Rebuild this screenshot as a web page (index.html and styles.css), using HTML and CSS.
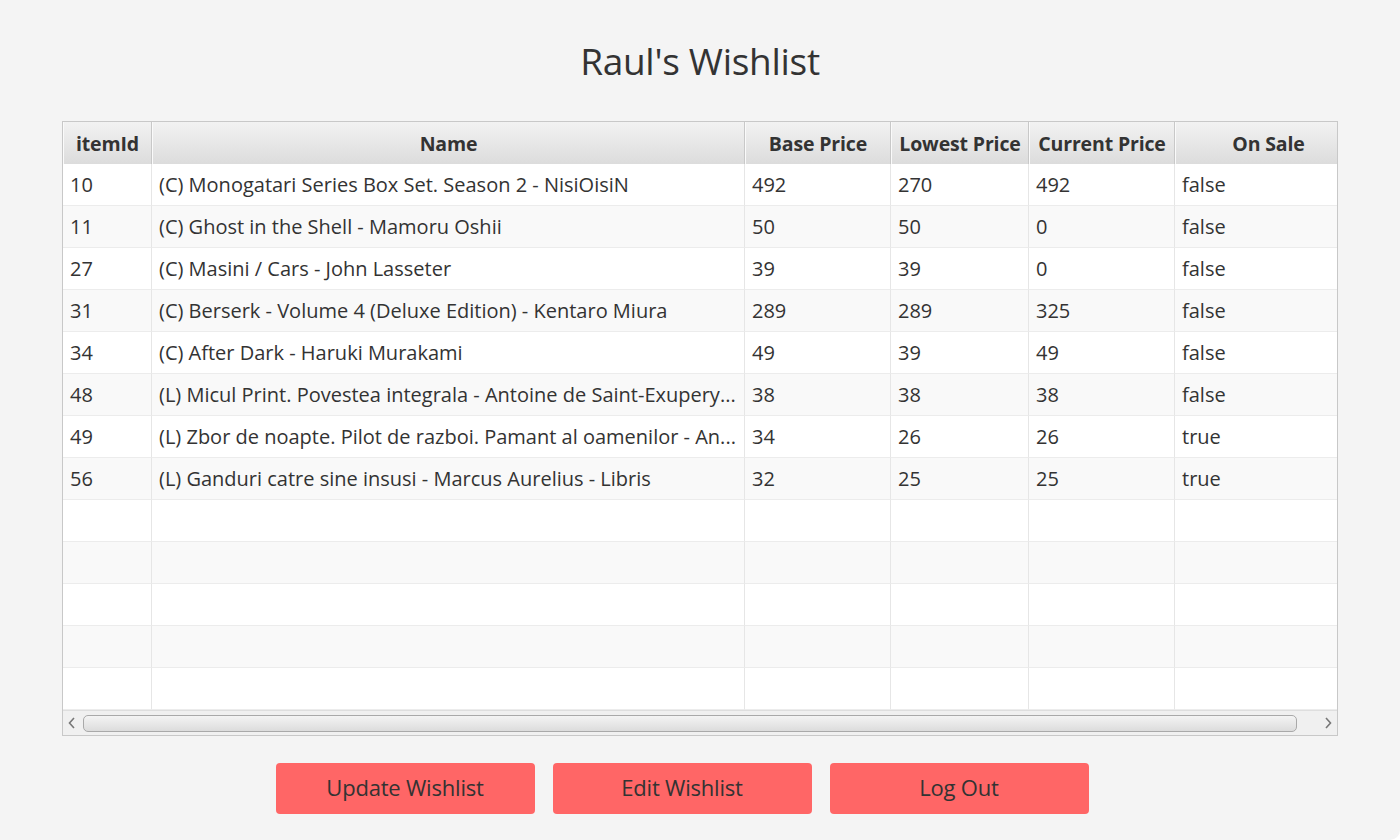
FILE: index.html
```html
<!DOCTYPE html>
<html lang="en">
<head>
<meta charset="utf-8">
<title>Raul's Wishlist</title>
<link rel="stylesheet" href="styles.css">
</head>
<body>
<div class="window">
  <h1 class="title">Raul's Wishlist</h1>
  <div class="table">
    <div class="grid">
      <div class="hd">itemId</div>
      <div class="hd">Name</div>
      <div class="hd">Base Price</div>
      <div class="hd">Lowest Price</div>
      <div class="hd">Current Price</div>
      <div class="hd last">On Sale</div>

      <div class="c">10</div><div class="c">(C) Monogatari Series Box Set. Season 2 - NisiOisiN</div><div class="c">492</div><div class="c">270</div><div class="c">492</div><div class="c">false</div>
      <div class="c o">11</div><div class="c o">(C) Ghost in the Shell - Mamoru Oshii</div><div class="c o">50</div><div class="c o">50</div><div class="c o">0</div><div class="c o">false</div>
      <div class="c">27</div><div class="c">(C) Masini / Cars - John Lasseter</div><div class="c">39</div><div class="c">39</div><div class="c">0</div><div class="c">false</div>
      <div class="c o">31</div><div class="c o">(C) Berserk - Volume 4 (Deluxe Edition) - Kentaro Miura</div><div class="c o">289</div><div class="c o">289</div><div class="c o">325</div><div class="c o">false</div>
      <div class="c">34</div><div class="c">(C) After Dark - Haruki Murakami</div><div class="c">49</div><div class="c">39</div><div class="c">49</div><div class="c">false</div>
      <div class="c o">48</div><div class="c o">(L) Micul Print. Povestea integrala - Antoine de Saint-Exupery...</div><div class="c o">38</div><div class="c o">38</div><div class="c o">38</div><div class="c o">false</div>
      <div class="c">49</div><div class="c">(L) Zbor de noapte. Pilot de razboi. Pamant al oamenilor - An...</div><div class="c">34</div><div class="c">26</div><div class="c">26</div><div class="c">true</div>
      <div class="c o">56</div><div class="c o">(L) Ganduri catre sine insusi - Marcus Aurelius - Libris</div><div class="c o">32</div><div class="c o">25</div><div class="c o">25</div><div class="c o">true</div>

      <div class="c"></div><div class="c"></div><div class="c"></div><div class="c"></div><div class="c"></div><div class="c"></div>
      <div class="c o"></div><div class="c o"></div><div class="c o"></div><div class="c o"></div><div class="c o"></div><div class="c o"></div>
      <div class="c"></div><div class="c"></div><div class="c"></div><div class="c"></div><div class="c"></div><div class="c"></div>
      <div class="c o"></div><div class="c o"></div><div class="c o"></div><div class="c o"></div><div class="c o"></div><div class="c o"></div>
      <div class="c"></div><div class="c"></div><div class="c"></div><div class="c"></div><div class="c"></div><div class="c"></div>
    </div>
    <div class="hscroll">
      <svg class="arrow" width="10" height="14" viewBox="0 0 10 14"><path d="M7 2 L2.5 7 L7 12" fill="none" stroke="#777" stroke-width="1.6"/></svg>
      <div class="thumb"></div>
      <svg class="arrow" width="10" height="14" viewBox="0 0 10 14"><path d="M3 2 L7.5 7 L3 12" fill="none" stroke="#777" stroke-width="1.6"/></svg>
    </div>
  </div>
  <div class="buttons">
    <button class="btn">Update Wishlist</button>
    <button class="btn">Edit Wishlist</button>
    <button class="btn">Log Out</button>
  </div>
</div>
</body>
</html>
```

FILE: styles.css
```css
html, body {
  margin: 0;
  padding: 0;
  background: #ffffff;
}
body {
  font-family: "Open Sans", "Noto Sans", "Liberation Sans", sans-serif;
  color: #333333;
}
.window {
  width: 1400px;
  height: 840px;
  background: #f4f4f4;
  border-bottom-right-radius: 10px;
  box-sizing: border-box;
  padding-top: 35px;
  display: flex;
  flex-direction: column;
  align-items: center;
}
.title {
  margin: 0;
  font-weight: 400;
  font-size: 37px;
  line-height: 52px;
  height: 52px;
  color: #333;
  letter-spacing: -0.3px;
}
.table {
  margin-top: 34px;
  width: 1276px;
  height: 615px;
  box-sizing: border-box;
  border: 1px solid #c8c8c8;
  background: #fff;
  display: flex;
  flex-direction: column;
  overflow: hidden;
}
.grid {
  display: grid;
  grid-template-columns: 89px 593px 146px 138px 146px 162px;
  grid-template-rows: 42px;
  grid-auto-rows: 42px;
  height: 589px;
  overflow: hidden;
}
.hd {
  background: linear-gradient(#f2f2f2, #dcdcdc);
  border-right: 1px solid #c8c8c8;
  border-left: 1px solid #fafafa;
  border-bottom: 1px solid #c4c4c4;
  box-sizing: border-box;
  height: 43px;
  font-weight: 700;
  font-size: 19.5px;
  display: flex;
  align-items: center;
  justify-content: center;
  letter-spacing: -0.15px;
  white-space: nowrap;
}
.hd.last {
  border-right: none;
  padding-left: 24px;
}
.c {
  box-sizing: border-box;
  height: 42px;
  border-right: 1px solid #e6e6e6;
  border-bottom: 1px solid #ececec;
  padding: 0 7px;
  font-size: 20px;
  display: flex;
  align-items: center;
  white-space: nowrap;
  overflow: hidden;
  background: #ffffff;
}
.c.o { background: #f9f9f9; }
.grid > .c:nth-child(6n) { border-right: none; }
.hscroll {
  height: 24px;
  background: #f0f0f0;
  border-top: 1px solid #dedede;
  display: flex;
  align-items: center;
  padding: 0 4px;
  gap: 6px;
}
.arrow { flex: none; }
.thumb {
  flex: 1;
  height: 15px;
  border: 1px solid #a9a9a9;
  border-radius: 5px;
  background: linear-gradient(#f4f4f4, #dcdcdc);
  margin-right: 20px;
}
.buttons {
  margin-top: 27px;
  margin-right: 36px;
  display: flex;
  gap: 18px;
}
.btn {
  width: 259px;
  height: 51px;
  border: none;
  border-radius: 4px;
  background: #ff6666;
  color: #333;
  font-family: "Open Sans", "Noto Sans", sans-serif;
  font-size: 22px;
  letter-spacing: -0.2px;
  padding: 0 0 4px 0;
}
```
